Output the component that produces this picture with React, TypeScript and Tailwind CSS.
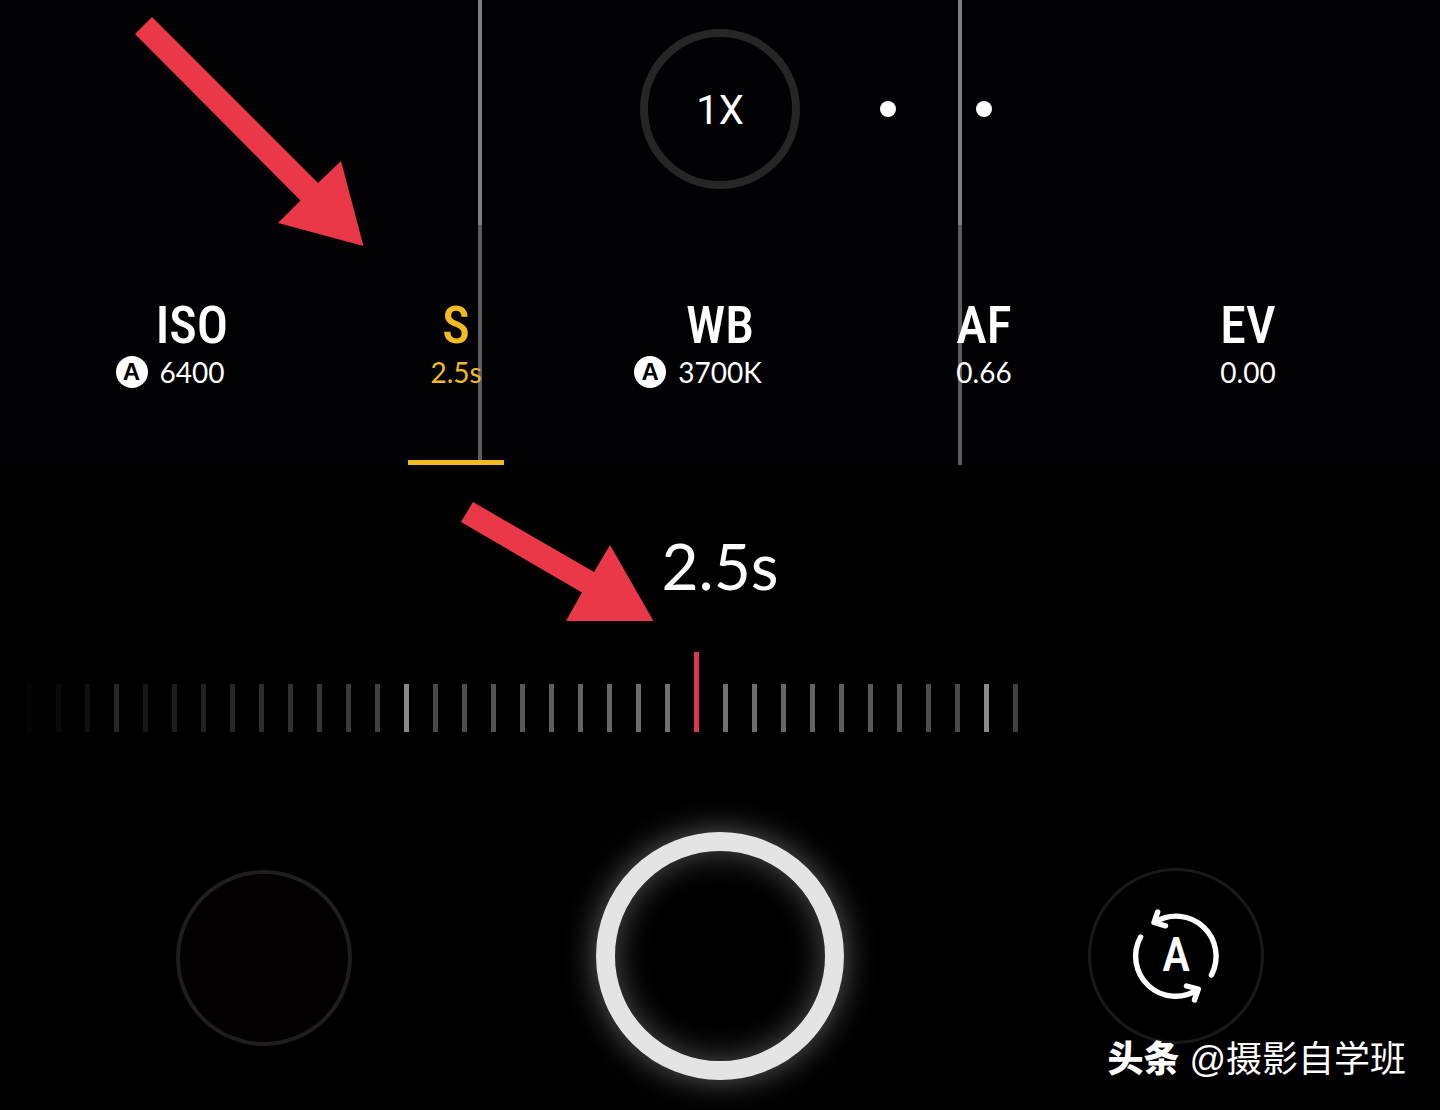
import React, { useState } from "react";

interface Mode {
  id: string;
  value: string;
  auto?: boolean;
}

const modes: Mode[] = [
  { id: "ISO", value: "6400", auto: true },
  { id: "S", value: "2.5s" },
  { id: "WB", value: "3700K", auto: true },
  { id: "AF", value: "0.66" },
  { id: "EV", value: "0.00" },
];

const TICK_COUNT = 35;
const MAJOR_EVERY = 10;

// ticks fade out the further they are from the selected one
function tickOpacity(index: number, current: number) {
  const base = 0.46 * Math.max(0, 1 - Math.abs(index - current) / 24);
  return index % MAJOR_EVERY === 3 ? base * 2 : base;
}

function GridLines({ className }: { className: string }) {
  return (
    <div aria-hidden="true" className="pointer-events-none absolute inset-0">
      <div className={`absolute inset-y-0 left-1/3 w-1 -translate-x-1/2 ${className}`} />
      <div className={`absolute inset-y-0 left-2/3 w-1 -translate-x-1/2 ${className}`} />
    </div>
  );
}

function ZoomBar() {
  return (
    <section className="relative bg-[#020204] pt-[29px] pb-9">
      <GridLines className="bg-[#808080]" />
      <div className="relative grid grid-cols-[1fr_auto_1fr] items-center">
        <button
          type="button"
          className="col-start-2 flex size-40 items-center justify-center rounded-full border-8 border-[#262626] pt-1 font-['Roboto',sans-serif] text-[40px]"
        >
          1X
        </button>
        <div className="flex gap-20 pl-20">
          <button type="button" aria-label="2X" className="size-4 rounded-full bg-white" />
          <button type="button" aria-label="5X" className="size-4 rounded-full bg-white" />
        </div>
      </div>
    </section>
  );
}

interface ModeTabProps {
  mode: Mode;
  active: boolean;
  onSelect: () => void;
}

function ModeTab({ mode, active, onSelect }: ModeTabProps) {
  return (
    <button
      type="button"
      aria-pressed={active}
      onClick={onSelect}
      className={`flex flex-col items-center pt-[73px] ${active ? "text-[#f2bc1f]" : "text-white"}`}
    >
      <span className="font-['Roboto_Condensed',Roboto,sans-serif] text-[52px] leading-[56px] font-medium">
        {mode.id}
      </span>
      <span className="mt-0.5 grid w-full grid-cols-[1fr_auto_1fr] items-center gap-3 text-[28px] leading-8">
        {mode.auto && (
          <span className="flex size-8 items-center justify-center justify-self-end rounded-full bg-white font-['Liberation_Sans',sans-serif] text-2xl font-bold text-black">
            A
          </span>
        )}
        <span className="col-start-2">{mode.value}</span>
      </span>
      <span className={`mt-[72px] h-[5px] w-24 ${active ? "bg-[#f2bc1f]" : ""}`} />
    </button>
  );
}

function ShutterDial() {
  const [current, setCurrent] = useState(23);

  return (
    <section className="pt-[61px]">
      <output htmlFor="shutter" className="block text-center text-[64px] leading-[80px]">
        2.5s
      </output>
      <div className="relative mt-[46px] flex h-20 items-end gap-6 overflow-hidden pl-[27px]">
        {Array.from({ length: TICK_COUNT }, (_, i) =>
          i === current ? (
            <span key={i} className="h-20 w-[5px] shrink-0 bg-[#d83a4b]" />
          ) : (
            <span
              key={i}
              className="h-12 w-[5px] shrink-0 bg-white"
              style={{ opacity: tickOpacity(i, current) }}
            />
          )
        )}
        <input
          id="shutter"
          type="range"
          aria-label="Shutter speed"
          min={0}
          max={TICK_COUNT - 1}
          value={current}
          onChange={(e) => setCurrent(Number(e.target.value))}
          className="absolute inset-0 h-full w-full opacity-0"
        />
      </div>
    </section>
  );
}

function AutoSwitchIcon() {
  return (
    <svg viewBox="0 0 96 96" className="size-24" fill="none" aria-hidden="true">
      <g stroke="white" strokeWidth="5.4" strokeLinecap="round" strokeLinejoin="round">
        <path d="M27 14.2A40 40 0 0 1 83.4 67" />
        <path d="M29.7 4L26 14.5L37.5 17.8" />
        <path d="M12.6 29A40 40 0 0 0 69.5 81.8" />
        <path d="M58.5 78L70.3 81L66.5 92" />
      </g>
      <text
        x="48"
        y="63"
        textAnchor="middle"
        fill="white"
        className="font-['Roboto_Condensed',Roboto,sans-serif] text-[48px] font-medium"
      >
        A
      </text>
    </svg>
  );
}

function Arrow({ points }: { points: string }) {
  return <polygon points={points} fill="#eb3849" />;
}

export default function App() {
  const [active, setActive] = useState("S");

  return (
    <main className="relative min-h-screen overflow-hidden bg-black font-['Lato',sans-serif] text-white">
      <ZoomBar />

      <section className="relative bg-[#020204]">
        <GridLines className="bg-[#5c5c5c]" />
        <div className="relative grid grid-cols-5 px-[60px]">
          {modes.map((mode) => (
            <ModeTab
              key={mode.id}
              mode={mode}
              active={mode.id === active}
              onSelect={() => setActive(mode.id)}
            />
          ))}
        </div>
      </section>

      <ShutterDial />

      <section className="flex items-center justify-between px-44 pt-[100px] pb-[30px]">
        <button
          type="button"
          aria-label="Gallery"
          className="mt-1 size-44 rounded-full border-4 border-[#1f1d1e] bg-[#030102]"
        />
        <button
          type="button"
          aria-label="Shutter"
          className="size-[248px] rounded-full border-[19px] border-[#e4e4e4] shadow-[0_0_32px_#606060,inset_0_0_32px_#505050]"
        />
        <button
          type="button"
          aria-label="Auto mode"
          className="flex size-44 items-center justify-center rounded-full border-[3px] border-[#191919]"
        >
          <AutoSwitchIcon />
        </button>
      </section>

      <svg
        aria-hidden="true"
        width="700"
        height="640"
        className="pointer-events-none absolute top-0 left-0"
      >
        <Arrow points="152,17 135,34 300.5,200.5 278,223 363.5,246 341,161 318,183" />
        <Arrow points="473,502 461,522 582,592.5 566,621 653.5,621 610,545 594,572" />
      </svg>

      <p className="absolute right-[34px] bottom-6 flex items-baseline gap-2.5 font-['Liberation_Sans','Noto_Sans_CJK_SC',sans-serif] text-4xl leading-[52px]">
        <span className="font-['Noto_Sans_CJK_SC',sans-serif] font-black">头条</span>
        <span>@摄影自学班</span>
      </p>
    </main>
  );
}
